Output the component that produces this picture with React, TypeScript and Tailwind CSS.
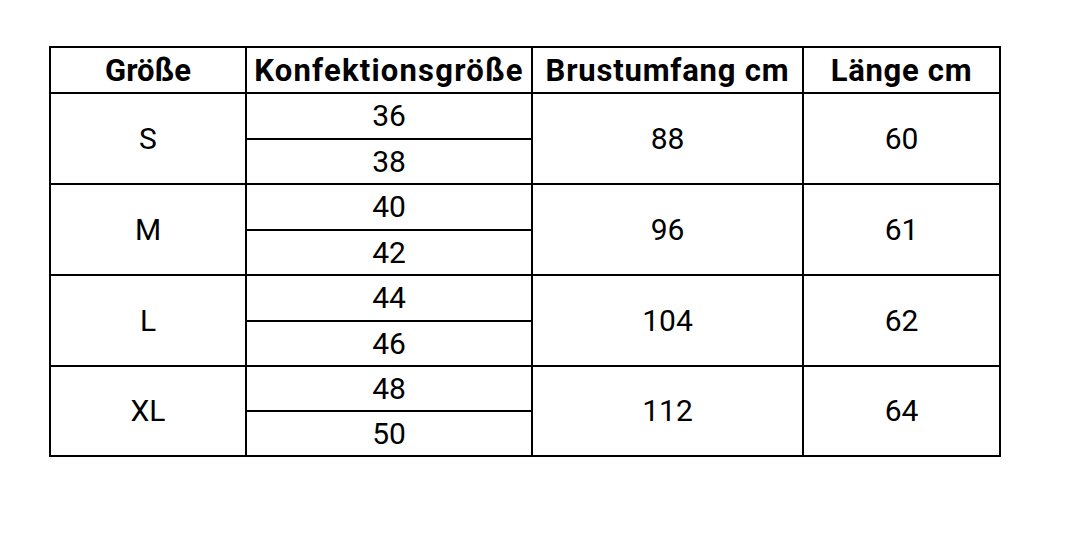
import React from "react";

const groups = [
  { size: "S", konf: ["36", "38"], brust: "88", laenge: "60" },
  { size: "M", konf: ["40", "42"], brust: "96", laenge: "61" },
  { size: "L", konf: ["44", "46"], brust: "104", laenge: "62" },
  { size: "XL", konf: ["48", "50"], brust: "112", laenge: "64" },
];

const rowSpans = [
  "row-start-2 row-span-2",
  "row-start-4 row-span-2",
  "row-start-6 row-span-2",
  "row-start-8 row-span-2",
];
const subRows = [
  ["row-start-2", "row-start-3"],
  ["row-start-4", "row-start-5"],
  ["row-start-6", "row-start-7"],
  ["row-start-8", "row-start-9"],
];

export default function App() {
  const cell = "bg-white flex items-center justify-center text-black";
  const body = "text-[30px] leading-none";
  const head = "text-[31px] font-bold leading-none";
  return (
    <div
      className="w-[1069px] h-[545px] bg-white pt-[46px] pl-[49px]"
      style={{ fontFamily: "Roboto, 'Liberation Sans', sans-serif" }}
    >
      <div className="grid w-[952px] bg-black p-[2px] gap-[2px] grid-cols-[194px_284px_269px_195px] grid-rows-[44px_44px_43px_44px_43px_44px_43px_43px_43px]">
        <div className={`${cell} ${head} col-start-1 row-start-1`}>Größe</div>
        <div className={`${cell} ${head} col-start-2 row-start-1 tracking-[1.2px]`}>Konfektionsgröße</div>
        <div className={`${cell} ${head} col-start-3 row-start-1 tracking-[0.8px]`}>Brustumfang cm</div>
        <div className={`${cell} ${head} col-start-4 row-start-1 tracking-[0.7px]`}>Länge cm</div>
        {groups.map((g, i) => (
          <React.Fragment key={g.size}>
            <div className={`${cell} ${body} col-start-1 ${rowSpans[i]}`}>{g.size}</div>
            <div className={`${cell} ${body} col-start-2 ${subRows[i][0]}`}>{g.konf[0]}</div>
            <div className={`${cell} ${body} col-start-2 ${subRows[i][1]}`}>{g.konf[1]}</div>
            <div className={`${cell} ${body} col-start-3 ${rowSpans[i]}`}>{g.brust}</div>
            <div className={`${cell} ${body} col-start-4 ${rowSpans[i]}`}>{g.laenge}</div>
          </React.Fragment>
        ))}
      </div>
    </div>
  );
}
